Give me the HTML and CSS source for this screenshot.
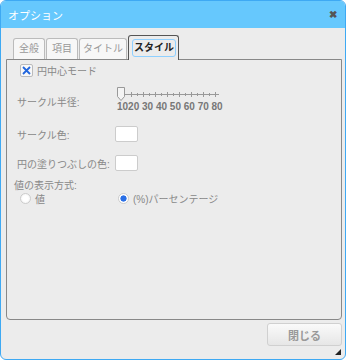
FILE: index.html
```html
<!DOCTYPE html>
<html>
<head>
    <title>オプション</title>
    <link rel="stylesheet" href="styles.css">
</head>
<body>
    <div class="window">
        <div class="titlebar">
            <span class="title">オプション</span>
            <span class="close">&#x2716;</span>
        </div>
        <div class="content">
            <div class="tabs">
                <div class="tab">全般</div>
                <div class="tab">項目</div>
                <div class="tab narrow">タイトル</div>
                <div class="tab active"><span class="focus">スタイル</span></div>
            </div>
            <div class="panel">
                <div class="check-row">
                    <span class="checkbox">
                        <svg width="11" height="11" viewBox="0 0 11 11">
                            <path d="M2 2 L9 9 M9 2 L2 9" stroke="#2266dd" stroke-width="1.8" fill="none"/>
                        </svg>
                    </span>
                    <span class="label">円中心モード</span>
                </div>

                <div class="form-row slider-row">
                    <span class="label">サークル半径:</span>
                    <div class="slider">
                        <svg width="104" height="14" viewBox="0 0 104 14">
                            <line x1="8" y1="7.5" x2="102" y2="7.5" stroke="#999" stroke-width="1"/>
                            <g stroke="#999" stroke-width="1">
                                <line x1="14.5" y1="5" x2="14.5" y2="10"/>
                                <line x1="26.5" y1="5" x2="26.5" y2="10"/>
                                <line x1="38.5" y1="5" x2="38.5" y2="10"/>
                                <line x1="50.5" y1="5" x2="50.5" y2="10"/>
                                <line x1="62.5" y1="5" x2="62.5" y2="10"/>
                                <line x1="74.5" y1="5" x2="74.5" y2="10"/>
                                <line x1="86.5" y1="5" x2="86.5" y2="10"/>
                                <line x1="98.5" y1="5" x2="98.5" y2="10"/>
                                <line x1="20.5" y1="6" x2="20.5" y2="9"/>
                                <line x1="32.5" y1="6" x2="32.5" y2="9"/>
                                <line x1="44.5" y1="6" x2="44.5" y2="9"/>
                                <line x1="56.5" y1="6" x2="56.5" y2="9"/>
                                <line x1="68.5" y1="6" x2="68.5" y2="9"/>
                                <line x1="80.5" y1="6" x2="80.5" y2="9"/>
                                <line x1="92.5" y1="6" x2="92.5" y2="9"/>
                            </g>
                            <path d="M0.5 0.5 H7.5 V9.5 L4 13.5 L0.5 9.5 Z" fill="#f4f4f4" stroke="#999" stroke-width="1"/>
                        </svg>
                        <div class="scale">1020 30 40 50 60 70 80</div>
                    </div>
                </div>

                <div class="form-row">
                    <span class="label">サークル色:</span>
                    <span class="swatch"></span>
                </div>

                <div class="form-row">
                    <span class="label">円の塗りつぶしの色:</span>
                    <span class="swatch"></span>
                </div>

                <div class="group-title">値の表示方式:</div>
                <div class="radio-row">
                    <div class="radio-item first">
                        <span class="radio"></span>
                        <span class="label">値</span>
                    </div>
                    <div class="radio-item">
                        <span class="radio checked"></span>
                        <span class="label">(%)パーセンテージ</span>
                    </div>
                </div>
            </div>
            <div class="footer">
                <button type="button">閉じる</button>
            </div>
        </div>
        <span class="grip"></span>
    </div>
</body>
</html>
```

FILE: styles.css
```css
body {
    margin: 0;
    font-family: "Liberation Sans", "Noto Sans CJK JP", sans-serif;
    background-color: #fff;
}

.window {
    position: relative;
    width: 346px;
    height: 360px;
    box-sizing: border-box;
    border: 1px solid #3ea9f3;
    border-radius: 6px;
    background-color: #ececec;
    overflow: hidden;
}

.titlebar {
    height: 27px;
    background-color: #66c8fd;
    display: flex;
    align-items: center;
    justify-content: space-between;
    padding: 0 8px 0 7px;
}

.title {
    color: #fff;
    font-size: 11px;
}

.close {
    color: #555;
    font-size: 10px;
    font-weight: bold;
}

.content {
    padding: 8px 3px 0 5px;
}

.tabs {
    display: flex;
    align-items: flex-end;
    padding-left: 7px;
    height: 24px;
    position: relative;
    z-index: 1;
    margin-bottom: -1px;
}

.tab {
    height: 21px;
    box-sizing: border-box;
    padding: 0 5px;
    margin-right: 1px;
    border: 1px solid #bbb;
    border-bottom: none;
    border-radius: 3px 3px 0 0;
    background-color: #f7f7f7;
    color: #999;
    font-size: 10px;
    line-height: 20px;
    margin-bottom: 1px;
}

.tab.narrow {
    padding: 0 3px;
}

.tab.active {
    height: 25px;
    margin-bottom: 0;
    padding: 2px 2px 0 3px;
    border-color: #555;
    background-color: #ececec;
    color: #222;
    font-weight: bold;
}

.focus {
    display: inline-block;
    line-height: 16px;
    padding: 0 1px;
    border: 1px solid #8fd0ff;
    border-radius: 3px;
}

.panel {
    height: 261px;
    box-sizing: border-box;
    border: 1px solid #888;
    border-radius: 0 0 4px 4px;
    padding: 4px 0 0 9px;
    color: #888;
    font-size: 10px;
    white-space: nowrap;
}

.check-row {
    display: flex;
    align-items: center;
    gap: 4px;
    padding-left: 4px;
    height: 13px;
}

.checkbox {
    width: 11px;
    height: 11px;
    border: 1px solid #bbb;
    border-radius: 2px;
    background-color: #f8f8f8;
    display: flex;
}

.form-row {
    display: flex;
    align-items: center;
    padding-left: 1px;
}

.form-row .label {
    width: 98px;
}

.slider-row {
    margin-top: 10px;
    align-items: flex-start;
}

.slider-row .label {
    margin-top: 7px;
}

.slider {
    display: flex;
    flex-direction: column;
    margin-left: 2px;
}

.slider svg {
    display: block;
}

.scale {
    font-size: 10px;
    font-weight: bold;
    color: #777;
    line-height: 12px;
}

.swatch {
    width: 21px;
    height: 14px;
    background-color: #fff;
    border: 1px solid #ccc;
    border-radius: 2px;
}

.slider-row + .form-row {
    margin-top: 13px;
}

.form-row + .form-row + .form-row {
    margin-top: 13px;
}

.group-title {
    margin-top: 6px;
    margin-left: -2px;
}

.radio-row {
    display: flex;
    margin-top: -1px;
    padding-left: 4px;
}

.radio-item {
    display: flex;
    align-items: center;
    gap: 4px;
}

.radio-item.first {
    width: 98px;
}

.radio {
    width: 11px;
    height: 11px;
    box-sizing: border-box;
    border: 1px solid #ccc;
    border-radius: 50%;
    background: radial-gradient(circle, #fff 40%, #eee 100%);
}

.radio.checked {
    background: radial-gradient(circle, #2a6fe6 0, #2a6fe6 2.8px, #fff 3.4px);
}

.footer {
    display: flex;
    justify-content: flex-end;
    padding-top: 3px;
}

button {
    width: 75px;
    height: 23px;
    border: 1px solid #d0d0d0;
    border-radius: 3px;
    background: linear-gradient(#fafafa, #e6e6e6);
    color: #999;
    font-family: "Liberation Sans", "Noto Sans CJK JP", sans-serif;
    font-size: 11px;
    font-weight: bold;
}

.grip {
    position: absolute;
    right: 4px;
    bottom: 4px;
    width: 0;
    height: 0;
    border-left: 6px solid transparent;
    border-bottom: 6px solid #222;
}
```
